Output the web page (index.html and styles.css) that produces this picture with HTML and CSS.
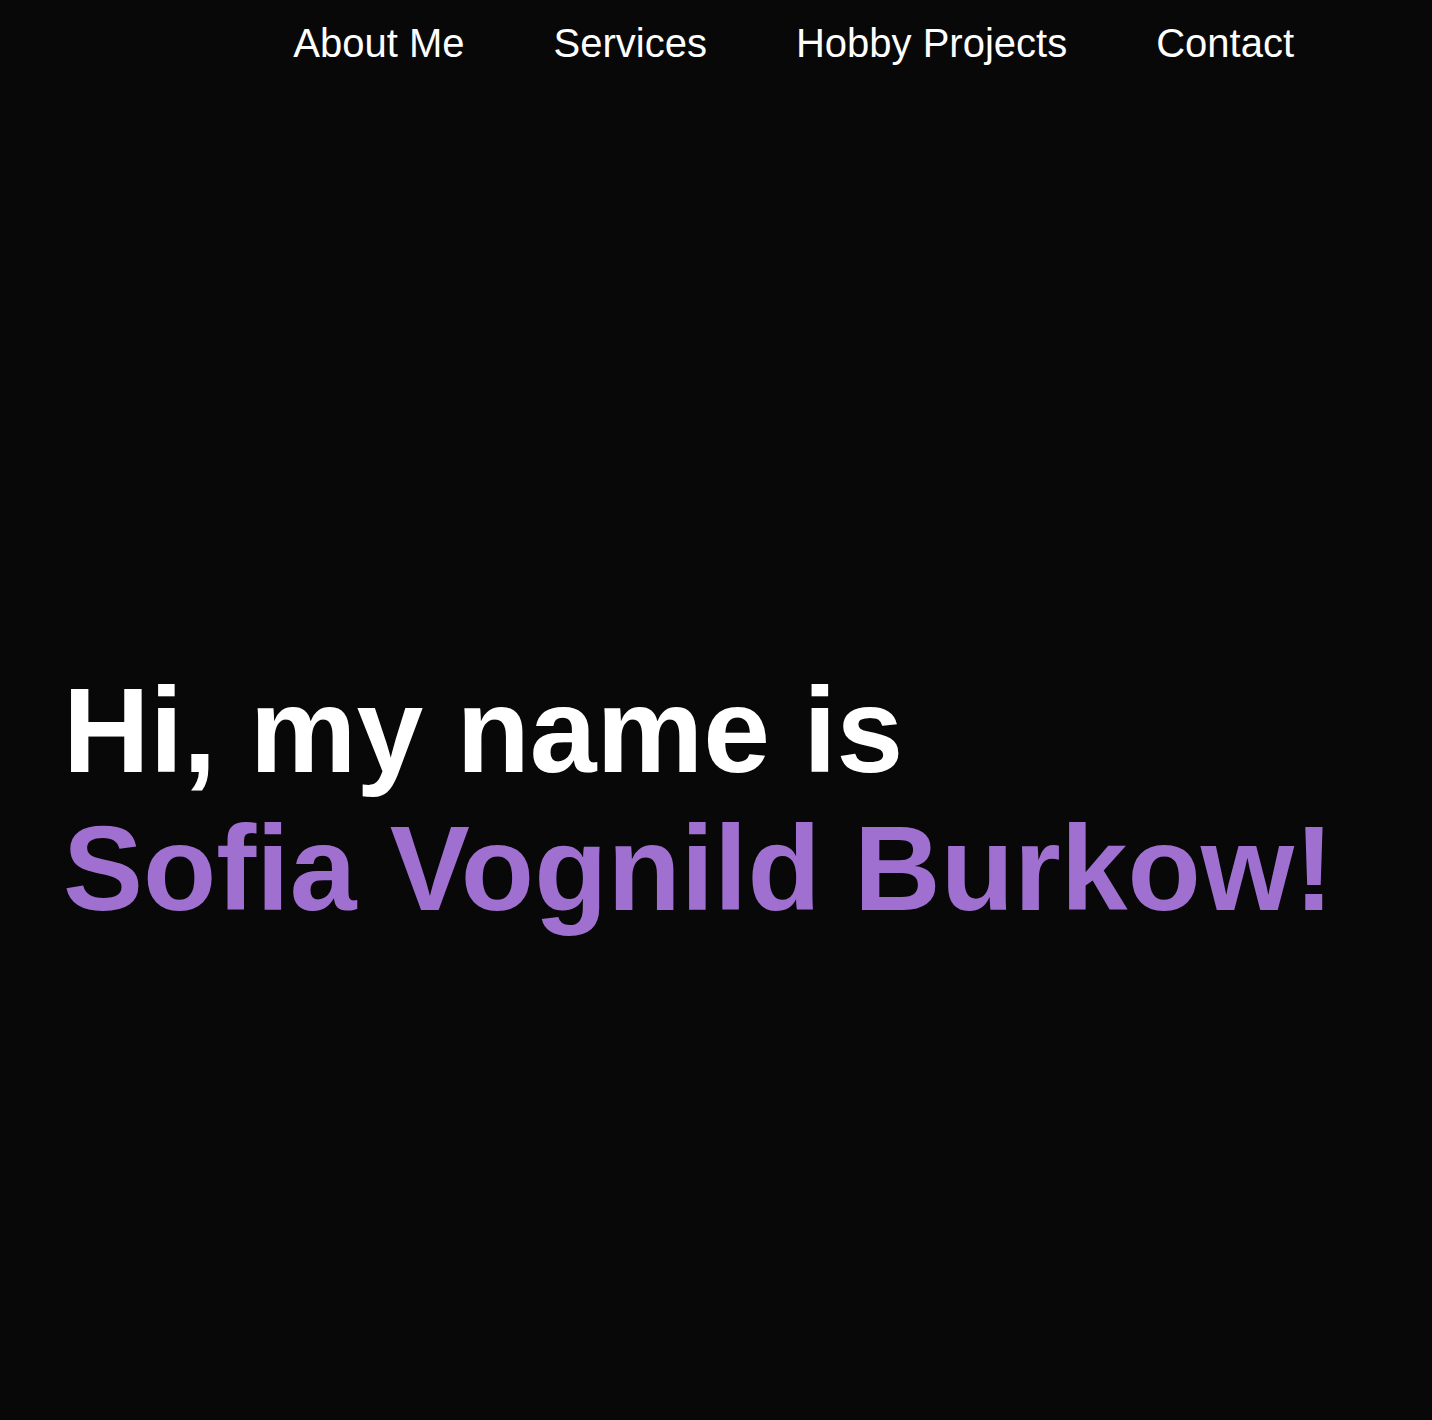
FILE: index.html
```html
<!DOCTYPE html>
<html lang="en">
<head>
<meta charset="utf-8">
<title>Sofia Vognild Burkow</title>
<link rel="stylesheet" href="styles.css">
</head>
<body>
<header class="site-header">
  <nav class="nav">
    <a class="nav-link" href="#about">About Me</a>
    <a class="nav-link" href="#services">Services</a>
    <a class="nav-link" href="#projects">Hobby Projects</a>
    <a class="nav-link" href="#contact">Contact</a>
  </nav>
</header>
<main class="hero">
  <h1 class="hero-title">
    <span class="hero-line">Hi, my name is</span>
    <span class="hero-line hero-name">Sofia Vognild Burkow!</span>
  </h1>
</main>
</body>
</html>
```

FILE: styles.css
```css
html, body {
  margin: 0;
  padding: 0;
  background: #080808;
  color: #ffffff;
  font-family: "Liberation Sans", Arial, Helvetica, sans-serif;
}

body {
  min-height: 1420px;
}

.site-header {
  padding: 20px 138px 0 0;
}

.nav {
  display: flex;
  justify-content: flex-end;
  gap: 89px;
}

.nav-link {
  color: #ffffff;
  text-decoration: none;
  font-size: 40px;
  line-height: 46px;
}

.hero {
  padding: 595px 0 0 63px;
}

.hero-title {
  margin: 0;
  font-size: 120px;
  font-weight: 700;
  line-height: 138px;
}

.hero-line {
  display: block;
}

.hero-name {
  color: #a070d0;
}
```
